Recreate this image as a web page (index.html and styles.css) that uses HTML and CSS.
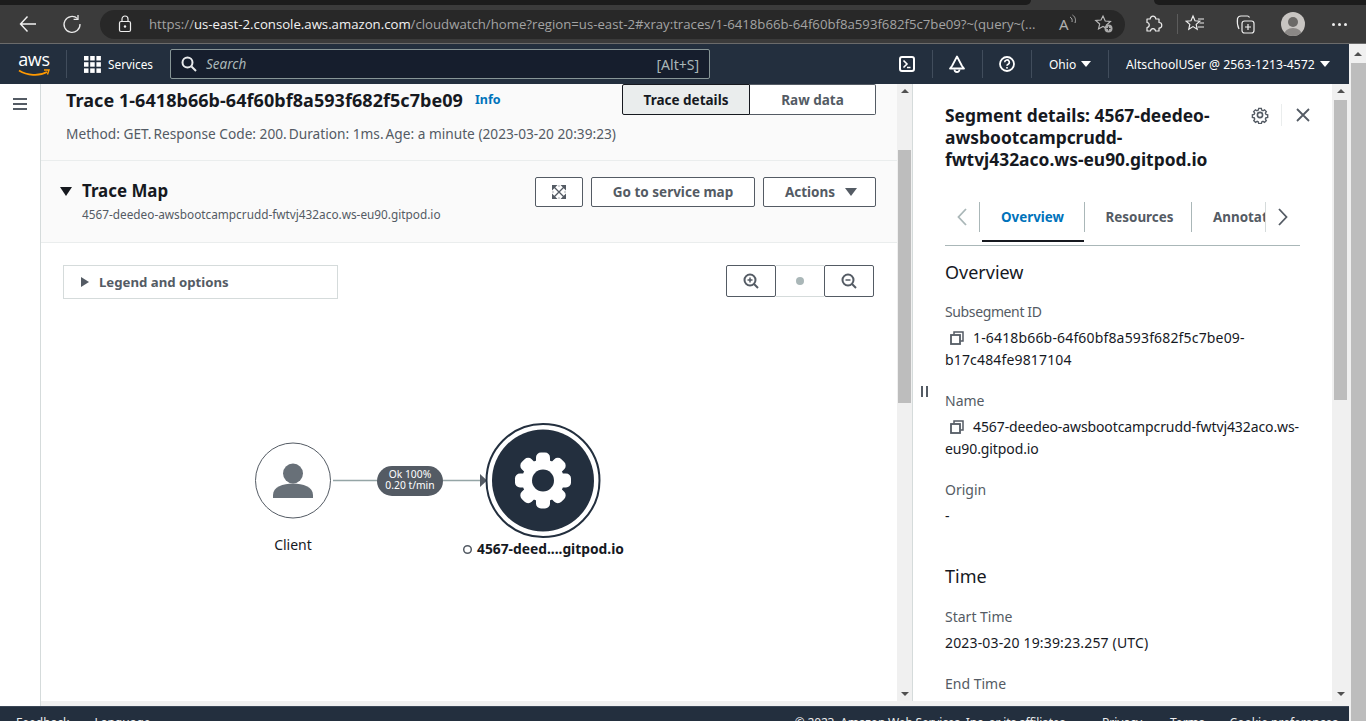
FILE: index.html
```html
<!DOCTYPE html>
<html lang="en">
<head>
<meta charset="utf-8">
<title>CloudWatch X-Ray trace</title>
<link rel="stylesheet" href="styles.css">
</head>
<body>
<header class="browser">
  <div class="tabstrip"><div class="tabs-left"></div><div class="tabs-right"></div></div>
  <div class="toolbar">
    <svg class="tb-icon back" width="20" height="20" viewBox="0 0 20 20"><path d="M18 10H2.500M9.500 2.500 2.500 10l7 7.500" fill="none" stroke="#f2f2f2" stroke-width="1.400"/></svg>
    <svg class="tb-icon reload" width="20" height="20" viewBox="0 0 20 20"><path d="M15.500 4.600A8 8 0 1 0 18 10" fill="none" stroke="#e8e8e8" stroke-width="1.300"/><path d="M16 1v4.400h-4.400" fill="none" stroke="#e8e8e8" stroke-width="1.300"/></svg>
    <div class="omnibox">
      <svg class="lock" width="14" height="18" viewBox="0 0 14 18"><rect x="1.500" y="6.500" width="11" height="10" rx="1.500" fill="none" stroke="#eee" stroke-width="1.200"/><path d="M4 6.500V4a3 3 0 0 1 6 0v2.500" fill="none" stroke="#eee" stroke-width="1.200"/><circle cx="7" cy="11.500" r="1.200" fill="#eee"/></svg>
      <div class="url"><span class="dim">https://</span><span class="host">us-east-2.console.aws.amazon.com</span><span class="dim">/cloudwatch/home?region=us-east-2#xray:traces/1-6418b66b-64f60bf8a593f682f5c7be09?~(query~(...</span></div>
      <span class="readaloud">A<svg width="9" height="12" viewBox="0 0 9 12"><path d="M1 3c2 1 2.500 3 2 5M3.500 1c3 2 3.500 5 2.500 8" fill="none" stroke="#aaa"/></svg></span>
      <svg class="favplus" width="20" height="20" viewBox="0 0 20 20"><path d="M9 2l2.200 5 5.300.5-4 3.500 1 4-4.500-2.500L4.500 15l1.200-5-4-3.500 5.300-.5z" fill="none" stroke="#bbb" stroke-width="1.100"/><circle cx="14.500" cy="14.500" r="4" fill="#aaa"/><path d="M14.500 12.500v4M12.500 14.500h4" stroke="#333" stroke-width="1"/></svg>
    </div>
    <svg class="ext" width="20" height="20" viewBox="0 0 20 20"><path d="M4 5h3.200a2.800 2.800 0 1 1 5.600 0H16v3.500a2.800 2.800 0 0 1 0 5.600V17h-3.500c-.4-3.200-4.600-3.200-5 0H4v-3.500c3-.4 3-4.600 0-5z" fill="none" stroke="#eee" stroke-width="1.200" stroke-linejoin="round"/></svg>
    <span class="tb-sep"></span>
    <svg class="favs" width="20" height="20" viewBox="0 0 20 20"><path d="M8 2l2 4.800 4.800.4-3.600 3.200 1 4.800L8 12.600 3.800 15.200l1-4.800L1.200 7.200 6 6.800z" fill="none" stroke="#eee" stroke-width="1.200"/><path d="M13 5h6M14.500 9H19M13 13h6" stroke="#eee" stroke-width="1.100"/></svg>
    <svg class="coll" width="20" height="20" viewBox="0 0 20 20"><path d="M4 15C2.500 12 2 8 2.500 4.500 3 2.800 4 2 6 2h6.500c1 0 1.500.5 2 1.500" fill="none" stroke="#eee" stroke-width="1.200"/><rect x="7" y="7" width="12" height="12" rx="2.500" fill="none" stroke="#eee" stroke-width="1.200"/><path d="M13 10v6M10 13h6" stroke="#eee" stroke-width="1.200"/></svg>
    <svg class="avatar" width="24" height="24" viewBox="0 0 24 24"><defs><clipPath id="av"><circle cx="12" cy="12" r="12"/></clipPath></defs><circle cx="12" cy="12" r="12" fill="#c8c5c2"/><g clip-path="url(#av)"><circle cx="12" cy="10" r="5" fill="#6b6967"/><ellipse cx="12" cy="23" rx="9" ry="7" fill="#8b8886"/></g></svg>
    <span class="dots"><i></i><i></i><i></i></span>
  </div>
</header>

<div class="lower">
  <div class="page">
    <nav class="awsnav">
      <div class="aws-logo"><span class="aws-word">aws</span><svg width="32" height="8" viewBox="0 0 32 8"><path d="M1 1.500c8 5 20 6 28 1.500" fill="none" stroke="#f90" stroke-width="1.800"/><path d="M26 1h5l-1.500 4.500" fill="none" stroke="#f90" stroke-width="1.400"/></svg></div>
      <span class="nav-sep first"></span>
      <svg class="grid" width="17" height="17" viewBox="0 0 17 17" fill="#fff"><rect width="4.500" height="4.500"/><rect x="6.200" width="4.500" height="4.500"/><rect x="12.400" width="4.500" height="4.500"/><rect y="6.200" width="4.500" height="4.500"/><rect x="6.200" y="6.200" width="4.500" height="4.500"/><rect x="12.400" y="6.200" width="4.500" height="4.500"/><rect y="12.400" width="4.500" height="4.500"/><rect x="6.200" y="12.400" width="4.500" height="4.500"/><rect x="12.400" y="12.400" width="4.500" height="4.500"/></svg>
      <span class="services">Services</span>
      <div class="search">
        <svg width="16" height="16" viewBox="0 0 16 16"><circle cx="6.500" cy="6.500" r="5" fill="none" stroke="#e9ebed" stroke-width="2"/><path d="M10.500 10.500 15 15" stroke="#e9ebed" stroke-width="2"/></svg>
        <span class="search-ph">Search</span>
        <span class="search-key">[Alt+S]</span>
      </div>
      <svg class="nav-ic shell" width="16" height="16" viewBox="0 0 16 16"><rect x="1" y="1" width="14" height="14" rx="2" fill="none" stroke="#fff" stroke-width="2"/><path d="M4.500 4.500 8 8l-3.500 3.500M8 11.500h3.500" fill="none" stroke="#fff" stroke-width="1.600"/></svg>
      <span class="nav-sep"></span>
      <svg class="nav-ic bell" width="16" height="18" viewBox="0 0 16 18"><path d="M8 1.500 13 11l2 2.500H1L3 11z" fill="none" stroke="#fff" stroke-width="1.800" stroke-linejoin="round"/><path d="M5.500 14.500a2.500 2.500 0 0 0 5 0" fill="none" stroke="#fff" stroke-width="1.800"/></svg>
      <span class="nav-sep"></span>
      <svg class="nav-ic help" width="16" height="16" viewBox="0 0 16 16"><circle cx="8" cy="8" r="7" fill="none" stroke="#fff" stroke-width="1.800"/><path d="M5.700 6.200a2.300 2.300 0 1 1 3.400 2c-.8.400-1.100.8-1.100 1.600" fill="none" stroke="#fff" stroke-width="1.600"/><rect x="7.200" y="11" width="1.600" height="1.600" fill="#fff"/></svg>
      <span class="nav-sep"></span>
      <span class="nav-menu ohio">Ohio<i class="caret"></i></span>
      <span class="nav-sep"></span>
      <span class="nav-menu user">AltschoolUSer @ 2563-1213-4572<i class="caret"></i></span>
    </nav>

    <div class="workspace">
      <aside class="sidenav">
        <div class="burger"><i></i><i></i><i></i></div>
      </aside>
      <div class="content">
        <div class="split">
          <main class="main">
            <section class="trace-head">
              <div class="trace-row">
                <h1 class="trace-title">Trace 1-6418b66b-64f60bf8a593f682f5c7be09</h1>
                <a class="info">Info</a>
                <div class="segmented"><span class="seg active">Trace details</span><span class="seg">Raw data</span></div>
              </div>
              <p class="trace-meta"><span>Method: GET.</span><span>Response Code: 200.</span><span>Duration: 1ms.</span><span>Age: a minute (2023-03-20 20:39:23)</span></p>
            </section>
            <section class="map-head">
              <i class="tri-down"></i>
              <div class="map-titles">
                <h2 class="map-title">Trace Map</h2>
                <p class="map-sub">4567-deedeo-awsbootcampcrudd-fwtvj432aco.ws-eu90.gitpod.io</p>
              </div>
              <div class="map-actions">
                <span class="btn btn-icon"><svg width="14" height="14" viewBox="0 0 14 14"><path d="M0 0h5.500L0 5.500zM14 0v5.500L8.500 0zM0 14V8.500L5.500 14zM14 14H8.500L14 8.500z" fill="#545b64"/><path d="M2 2l10 10M12 2 2 12" stroke="#545b64" stroke-width="1.300"/><path d="M6.500 1h1M1 6.500v1M13 6.500v1M6.500 13h1" stroke="#545b64" stroke-width="1"/></svg></span>
                <span class="btn btn-go">Go to service map</span>
                <span class="btn btn-actions">Actions<i class="caret-dark"></i></span>
              </div>
            </section>
            <section class="map-body">
              <div class="map-controls">
                <div class="legend"><i class="tri-right"></i>Legend and options</div>
                <div class="zoom">
                  <span class="zoom-btn"><svg width="16" height="16" viewBox="0 0 16 16"><circle cx="7" cy="7" r="5.500" fill="none" stroke="#545b64" stroke-width="2"/><path d="M11 11l4 4" stroke="#545b64" stroke-width="2"/><path d="M7 4.500v5M4.500 7h5" stroke="#545b64" stroke-width="1.500"/></svg></span>
                  <span class="zoom-mid"><i></i></span>
                  <span class="zoom-btn"><svg width="16" height="16" viewBox="0 0 16 16"><circle cx="7" cy="7" r="5.500" fill="none" stroke="#545b64" stroke-width="2"/><path d="M11 11l4 4" stroke="#545b64" stroke-width="2"/><path d="M4.500 7h5" stroke="#545b64" stroke-width="1.500"/></svg></span>
                </div>
              </div>
              <svg class="diagram" width="400" height="150" viewBox="240 415 400 150">
                <circle cx="293" cy="479.500" r="37.500" fill="#fff" stroke="#545b64"/>
                <circle cx="293" cy="472.500" r="10" fill="#687078"/>
                <path d="M273 497v-3c0-8 10-11.500 20-11.500s20 3.500 20 11.500v3z" fill="#687078"/>
                <path d="M333 479.500h148" stroke="#95a5a6" stroke-width="1.500"/>
                <path d="M480 473l7 6.500-7 6.500z" fill="#545b64"/>
                <rect x="377" y="465" width="66" height="30" rx="15" fill="#545b64"/>
                <text class="d-pill" x="410" y="477">Ok 100%</text>
                <text class="d-pill" x="410" y="488">0.20 t/min</text>
                <circle cx="543" cy="479.500" r="56.500" fill="#fff" stroke="#232f3e" stroke-width="2"/>
                <circle cx="543" cy="479.500" r="51" fill="#232f3e"/>
                <g transform="translate(543 479.500)" fill="#fff">
                  <circle r="21"/>
                  <rect x="-7" y="-28" width="14" height="56" rx="5"/>
                  <rect x="-7" y="-28" width="14" height="56" rx="5" transform="rotate(45)"/>
                  <rect x="-7" y="-28" width="14" height="56" rx="5" transform="rotate(90)"/>
                  <rect x="-7" y="-28" width="14" height="56" rx="5" transform="rotate(135)"/>
                  <circle r="11" fill="#232f3e"/>
                </g>
                <text class="d-client" x="293" y="549">Client</text>
                <circle cx="467.500" cy="548.500" r="3.800" fill="#fff" stroke="#545b64" stroke-width="1.500"/>
                <text class="d-name" x="477" y="553">4567-deed....gitpod.io</text>
              </svg>
            </section>
          </main>
          <div class="vscroll main-scroll"><i class="arrow-up"></i><i class="thumb"></i><i class="arrow-down"></i></div>
          <aside class="panel">
            <div class="handle"><i></i><i></i></div>
            <div class="panel-body">
              <div class="panel-head">
                <h2 class="panel-title">Segment details: 4567-deedeo-awsbootcampcrudd-fwtvj432aco.ws-eu90.gitpod.io</h2>
                <svg class="panel-gear" width="18" height="18" viewBox="0 0 18 18"><path d="M7.500 1.200h3l.4 2.100 1.500.7 1.800-1.100 2.100 2.100-1.100 1.800.7 1.500 2 .4v3l-2 .4-.7 1.500 1.100 1.800-2.100 2.100-1.800-1.100-1.500.7-.4 2h-3l-.4-2-1.500-.7-1.800 1.100-2.100-2.100 1.100-1.800-.7-1.500-2-.4v-3l2-.4.7-1.500L1.600 5l2.100-2.100 1.800 1.100 1.500-.7z" fill="none" stroke="#545b64" stroke-width="1.600" transform="translate(1.300 1.300) scale(.86)"/><circle cx="9" cy="9" r="2.600" fill="none" stroke="#545b64" stroke-width="1.600"/></svg>
                <span class="panel-sep"></span>
                <svg class="panel-close" width="14" height="14" viewBox="0 0 14 14"><path d="M1 1l12 12M13 1 1 13" stroke="#545b64" stroke-width="1.800"/></svg>
              </div>
              <div class="tabs">
                <svg class="chev off" width="10" height="18" viewBox="0 0 10 18"><path d="M9 1 1.500 9 9 17" fill="none" stroke="#aab7b8" stroke-width="1.800"/></svg>
                <span class="tab active">Overview</span>
                <span class="tab res">Resources</span>
                <span class="tab ann"><span>Annotations</span></span>
                <svg class="chev" width="10" height="18" viewBox="0 0 10 18"><path d="M1 1l7.500 8L1 17" fill="none" stroke="#545b64" stroke-width="1.800"/></svg>
              </div>
              <h3 class="sec first-sec">Overview</h3>
              <div class="kv"><div class="k k-tight">Subsegment ID</div><div class="v v-id"><svg class="copy" width="14" height="14" viewBox="0 0 14 14"><rect x="1" y="4" width="9" height="9" fill="none" stroke="#545b64" stroke-width="1.800"/><path d="M4 3.500V1h9v9h-2.500" fill="none" stroke="#545b64" stroke-width="1.500"/></svg>1-6418b66b-64f60bf8a593f682f5c7be09-b17c484fe9817104</div></div>
              <div class="kv"><div class="k">Name</div><div class="v v-name"><svg class="copy" width="14" height="14" viewBox="0 0 14 14"><rect x="1" y="4" width="9" height="9" fill="none" stroke="#545b64" stroke-width="1.800"/><path d="M4 3.500V1h9v9h-2.500" fill="none" stroke="#545b64" stroke-width="1.500"/></svg>4567-deedeo-awsbootcampcrudd-fwtvj432aco.ws-eu90.gitpod.io</div></div>
              <div class="kv"><div class="k">Origin</div><div class="v">-</div></div>
              <h3 class="sec time-sec">Time</h3>
              <div class="kv"><div class="k">Start Time</div><div class="v v-id">2023-03-20 19:39:23.257 (UTC)</div></div>
              <div class="kv"><div class="k">End Time</div></div>
            </div>
          </aside>
          <div class="vscroll panel-scroll"><i class="arrow-up"></i><i class="thumb"></i><i class="arrow-down"></i></div>
        </div>
        <div class="hbar"></div>
      </div>
    </div>

    <footer class="footer">
      <span class="f-feedback">Feedback</span><span class="f-lang">Language</span>
      <span class="f-copy">© 2023, Amazon Web Services, Inc. or its affiliates.</span>
      <span class="f-privacy">Privacy</span><span class="f-terms">Terms</span><span class="f-cookie">Cookie preferences</span>
    </footer>
  </div>
  <div class="page-scroll"><i class="arrow-up"></i><i class="thumb"></i></div>
</div>
</body>
</html>
```
FILE: styles.css
```css
* { box-sizing: border-box; }
html, body { margin: 0; height: 721px; overflow: hidden; }
body { font-family: "Noto Sans", "Open Sans", sans-serif; font-size: 14px; color: #16191f; background: #fff; display: flex; flex-direction: column; }
h1, h2, h3, p { margin: 0; }
i { display: block; font-style: normal; }

/* browser chrome */
.browser { height: 44px; flex: none; background: #3b3b3b; border-bottom: 1px solid #6b6b6b; }
.tabstrip { height: 5px; display: flex; justify-content: space-between; }
.tabs-left { width: 1031px; background: #1c1c1c; border-bottom-right-radius: 5px; }
.tabs-right { width: 212px; background: #1c1c1c; border-bottom-left-radius: 5px; }
.toolbar { height: 38px; display: flex; align-items: center; }
.back { margin-left: 18px; }
.reload { margin-left: 24px; }
.omnibox { margin-left: 18px; width: 1025px; height: 29px; border-radius: 15px; background: #282828; display: flex; align-items: center; padding-left: 18px; flex: none; }
.lock { flex: none; }
.url { margin-left: 17px; width: 899px; white-space: nowrap; overflow: hidden; font-family: "Open Sans", sans-serif; font-size: 13.200px; color: #a3a3a3; flex: none; }
.host { color: #f2f2f2; }
.readaloud { margin-left: 11px; color: #b0b0b0; font-size: 15px; display: flex; flex: none; width: 22px; }
.favplus { margin-left: 13px; flex: none; }
.ext { margin-left: 18px; flex: none; }
.tb-sep { width: 1px; height: 20px; background: #5c5c5c; margin-left: 14px; flex: none; }
.favs { margin-left: 7px; flex: none; }
.coll { margin-left: 30px; flex: none; }
.avatar { margin-left: 26px; flex: none; }
.dots { margin-left: 27px; display: flex; gap: 3px; flex: none; }
.dots i { width: 3px; height: 3px; background: #eee; border-radius: 50%; }

.lower { flex: 1; min-height: 0; display: flex; }
.page { width: 1349px; display: flex; flex-direction: column; flex: none; }

/* aws nav */
.awsnav { height: 40px; flex: none; background: #232f3e; display: flex; align-items: center; color: #fff; }
.aws-logo { width: 32px; margin-left: 18px; display: flex; flex-direction: column; align-items: center; flex: none; height: 26px; }
.aws-word { font-size: 18px; line-height: 17px; letter-spacing: -.3px; font-family: "Open Sans", sans-serif; }
.aws-logo svg { display: block; margin-top: 1px; }
.nav-sep { width: 1px; height: 28px; background: #414d5c; flex: none; margin: 0 17px; }
.nav-sep.first { margin: 0 17px 0 16px; }
.grid { flex: none; }
.services { margin-left: 7px; font-size: 11.800px; flex: none; width: 46px; white-space: nowrap; }
.search { margin-left: 16px; width: 540px; height: 30px; background: #161e2d; border: 1px solid #879596; border-radius: 2px; display: flex; align-items: center; padding: 0 10px; flex: none; }
.search-ph { margin-left: 9px; font-style: italic; color: #aab7b8; font-size: 13.500px; }
.search-key { margin-left: auto; color: #aab7b8; font-size: 14px; }
.shell { margin-left: 189px; }
.nav-ic { flex: none; }
.bell { margin-left: -1px; }
.help { margin: 0 -1px; }
.nav-menu { display: flex; align-items: center; font-size: 12.200px; white-space: nowrap; flex: none; }
.ohio { font-size: 12px; width: 42px; }
.caret { width: 0; height: 0; border-left: 5px solid transparent; border-right: 5px solid transparent; border-top: 6px solid #fff; margin-left: 5px; }

/* workspace */
.workspace { flex: 1; min-height: 0; display: flex; }
.sidenav { width: 41px; flex: none; border-right: 1px solid #d5dbdb; background: #fff; }
.burger { margin: 14px 0 0 13px; width: 14px; display: flex; flex-direction: column; gap: 3px; }
.burger i { height: 2px; background: #545b64; }
.content { flex: 1; min-width: 0; display: flex; flex-direction: column; }
.split { flex: 1; min-height: 0; display: flex; }
.hbar { height: 5px; background: #f0f0f0; flex: none; }
.main { width: 856px; flex: none; display: flex; flex-direction: column; overflow: hidden; }

.trace-head { height: 77px; flex: none; background: #fafafa; border-bottom: 1px solid #eaeded; padding: 0 21px 0 25px; }
.trace-row { display: flex; align-items: center; height: 31px; }
.trace-title { font-size: 18px; font-weight: 700; line-height: 30px; white-space: nowrap; letter-spacing: .05px; }
.info { margin-left: 12px; color: #0073bb; font-size: 12.500px; font-weight: 700; }
.segmented { margin-left: auto; display: flex; height: 31px; }
.seg { width: 126px; height: 31px; border: 1px solid #545b64; border-left: 0; border-radius: 0 2px 2px 0; background: #fff; color: #545b64; font-weight: 700; font-size: 13.500px; display: flex; align-items: center; justify-content: center; }
.seg.active { width: 128px; border: 1px solid #16191f; border-radius: 2px 0 0 2px; background: #eaeded; color: #16191f; }
.trace-meta { margin-top: 9px; color: #545b64; font-size: 13.700px; line-height: 20px; display: flex; gap: 2px; white-space: nowrap; }

.map-head { height: 82px; flex: none; background: #fafafa; border-bottom: 1px solid #eaeded; padding: 16px 21px 0 19px; display: flex; }
.tri-down { width: 0; height: 0; border-left: 6px solid transparent; border-right: 6px solid transparent; border-top: 9px solid #16191f; margin-top: 10px; flex: none; }
.map-titles { margin-left: 10px; }
.map-title { font-size: 16.900px; font-weight: 700; line-height: 28px; }
.map-sub { font-size: 11.800px; color: #545b64; line-height: 16px; margin-top: 1px; white-space: nowrap; }
.map-actions { margin-left: auto; display: flex; gap: 8px; height: 30px; }
.btn { height: 30px; border: 1px solid #545b64; border-radius: 2px; background: #fff; color: #545b64; font-weight: 700; font-size: 13.500px; display: flex; align-items: center; justify-content: center; }
.btn-icon { width: 48px; }
.btn-go { width: 164px; }
.btn-actions { width: 113px; padding-left: 3px; }
.caret-dark { width: 0; height: 0; border-left: 6px solid transparent; border-right: 6px solid transparent; border-top: 8px solid #545b64; margin-left: 10px; }

.map-body { flex: 1; min-height: 0; background: #fff; padding: 22px 23px 0 22px; }
.map-controls { display: flex; justify-content: space-between; }
.legend { width: 275px; height: 34px; border: 1px solid #d5dbdb; color: #545b64; font-weight: 700; font-size: 13.200px; display: flex; align-items: center; padding-left: 17px; }
.tri-right { width: 0; height: 0; border-top: 5.500px solid transparent; border-bottom: 5.500px solid transparent; border-left: 8px solid #545b64; margin-right: 10px; }
.zoom { display: flex; height: 32px; }
.zoom-btn { width: 50px; height: 32px; border: 1px solid #545b64; border-radius: 2px; background: #fff; display: flex; align-items: center; justify-content: center; }
.zoom-mid { width: 48px; height: 32px; border-top: 1px solid #d5dbdb; border-bottom: 1px solid #d5dbdb; display: flex; align-items: center; justify-content: center; }
.zoom-mid i { width: 8px; height: 8px; border-radius: 50%; background: #aab7b8; }
.diagram { display: block; margin: 117px 0 0 177px; overflow: visible; }
.d-pill { fill: #fff; font-size: 10.300px; text-anchor: middle; }
.d-client { fill: #16191f; font-size: 14px; text-anchor: middle; }
.d-name { fill: #16191f; font-size: 13.800px; font-weight: 700; }

/* scrollbars */
.vscroll { width: 15px; flex: none; background: #f0f0f0; position: relative; }
.panel-scroll { width: 17px; }
.thumb { position: absolute; background: #bdbdbd; }
.main-scroll .thumb { left: 1px; right: 1px; top: 66px; height: 253px; }
.panel-scroll .thumb { left: 2px; right: 2px; top: 16px; height: 300px; }
.arrow-up, .arrow-down { position: absolute; left: 50%; margin-left: -4px; width: 0; height: 0; border-left: 4px solid transparent; border-right: 4px solid transparent; }
.arrow-up { top: 5px; border-bottom: 4px solid #505050; }
.arrow-down { bottom: 5px; border-top: 4px solid #505050; }

/* panel */
.panel { width: 420px; flex: none; border-left: 1px solid #d5dbdb; display: flex; overflow: hidden; background: #fff; }
.handle { width: 32px; flex: none; display: flex; gap: 3px; padding: 302px 0 0 8px; }
.handle i { width: 2px; height: 11px; background: #545b64; }
.panel-body { width: 355px; flex: none; padding-top: 20px; }
.panel-head { position: relative; height: 93px; }
.panel-title { font-size: 17.400px; font-weight: 700; line-height: 22px; width: 290px; color: #16191f; }
.panel-gear { position: absolute; left: 306px; top: 2px; }
.panel-sep { position: absolute; left: 336px; top: 0; height: 22px; width: 1px; background: #eaeded; }
.panel-close { position: absolute; left: 351px; top: 4px; }
.tabs { height: 49px; display: flex; align-items: center; border-bottom: 1px solid #aab7b8; padding-bottom: 9px; position: relative; }
.chev { flex: none; }
.chev.off { margin-left: 12px; }
.tab { height: 30px; display: flex; align-items: center; justify-content: center; font-weight: 700; font-size: 13.400px; color: #545b64; border-left: 1px solid #aab7b8; flex: none; white-space: nowrap; }
.tab.active { width: 105px; margin-left: 12px; padding-left: 1px; color: #0073bb; position: relative; }
.tab.active::after { content: ""; position: absolute; left: 2px; right: 0; bottom: -10px; height: 2px; background: #16191f; }
.tab.res { width: 107px; padding-left: 3px; }
.tab.ann { width: 75px; overflow: hidden; justify-content: flex-start; padding-left: 21px; border-right: 1px solid #d5dbdb; }
.chev:last-child { margin-left: 12px; }
.sec { font-size: 18px; font-weight: 400; line-height: 26px; color: #16191f; }
.first-sec { margin-top: 13px; }
.time-sec { margin-top: 36px; }
.kv { margin-top: 20px; }
.sec + .kv { margin-top: 17px; }
.time-sec + .kv { margin-top: 18px; }
.k { color: #545b64; font-size: 14px; line-height: 20px; }
.k-tight { letter-spacing: -.38px; }
.v { margin-top: 5px; line-height: 22px; font-size: 14px; color: #16191f; }
.v-id { letter-spacing: .16px; }
.v-name { letter-spacing: -.1px; }
.copy { margin: 0 9px 0 5px; vertical-align: -2px; }

/* footer */
.footer { height: 15px; flex: none; background: #232f3e; border-top: 1px solid #3a4656; color: #eee; font-size: 12px; line-height: 16px; padding-top: 8px; overflow: hidden; display: flex; white-space: nowrap; }
.f-feedback { margin-left: 16px; }
.f-lang { margin-left: 25px; }
.f-copy { margin-left: auto; letter-spacing: -.18px; }
.f-privacy { margin-left: 34px; }
.f-terms { margin-left: 28px; }
.f-cookie { margin-left: 25px; margin-right: 11px; }

.page-scroll { width: 17px; flex: none; background: #f0f0f0; position: relative; }
.page-scroll .thumb { left: 2px; right: 0; top: 19px; bottom: 0; }
.page-scroll .arrow-up { top: 8px; }
```
